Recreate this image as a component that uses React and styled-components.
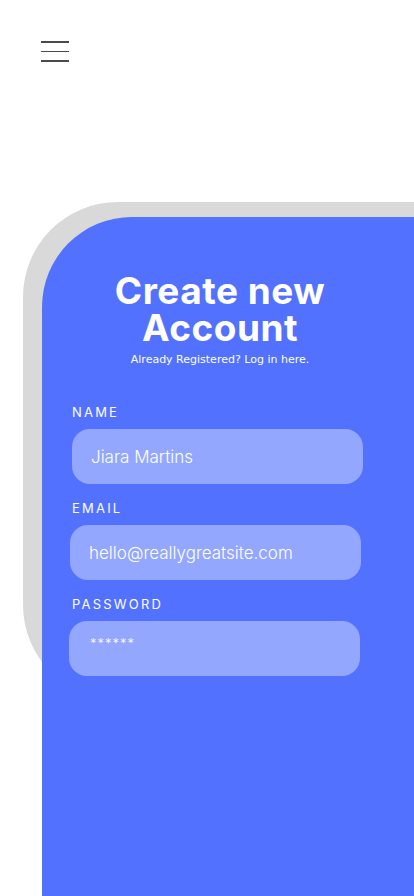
import React from "react";
import styled, { createGlobalStyle } from "styled-components";

const GlobalStyle = createGlobalStyle`
    html, body {
        margin: 0;
        padding: 0;
        background: #ffffff;
        overflow: hidden;
    }
    body {
        font-family: Inter, "Noto Sans", sans-serif;
    }
`;

const fields = [
    { label: "NAME", value: "Jiara Martins", shift: 0 },
    { label: "EMAIL", value: "hello@reallygreatsite.com", shift: -2 },
    { label: "PASSWORD", value: "******", shift: -3, secret: true },
];

const App = () => {
    return (
        <>
            <GlobalStyle />
            <Page>
                <TopBar>
                    <MenuButton aria-label="Menu">
                        <Bar />
                        <Bar />
                        <Bar />
                    </MenuButton>
                </TopBar>
                <Backdrop>
                    <Card>
                        <Content>
                            <Title>
                                Create new
                                <br />
                                Account
                            </Title>
                            <Subtitle>Already Registered? Log in here.</Subtitle>
                            <Form>
                                {fields.map((field) => (
                                    <Field key={field.label}>
                                        <Label>{field.label}</Label>
                                        <InputBox $shift={field.shift} $secret={field.secret}>
                                            {field.value}
                                        </InputBox>
                                    </Field>
                                ))}
                            </Form>
                        </Content>
                    </Card>
                </Backdrop>
            </Page>
        </>
    );
};

export default App;

const Page = styled.div`
    width: 414px;
    height: 896px;
    overflow: hidden;
    position: relative;
`;

const TopBar = styled.header`
    box-sizing: border-box;
    height: 202px;
    padding: 41px 0 0 41px;
`;

const MenuButton = styled.div`
    width: 28px;
    display: flex;
    flex-direction: column;
    gap: 8px;
`;

const Bar = styled.span`
    display: block;
    height: 1.5px;
    background: #4a4a4a;
`;

const Backdrop = styled.section`
    box-sizing: border-box;
    margin-left: 23px;
    width: 480px;
    height: 498px;
    padding: 15px 0 0 19px;
    background: #d9d9d9;
    border-radius: 95px 0 0 95px;
`;

const Card = styled.div`
    box-sizing: border-box;
    width: 460px;
    height: 700px;
    background: #5271ff;
    border-radius: 90px 0 0 0;
    padding: 55px 0 0 30px;
`;

const Content = styled.div`
    width: 291px;
    display: flex;
    flex-direction: column;
`;

const Title = styled.h1`
    margin: 0;
    padding-left: 5px;
    text-align: center;
    color: #ffffff;
    font-family: Inter, "Noto Sans", sans-serif;
    font-weight: 700;
    font-size: 37px;
    line-height: 37px;
    letter-spacing: 0.5px;
`;

const Subtitle = styled.p`
    margin: 7px 0 0;
    padding-left: 5px;
    text-align: center;
    color: #ffffff;
    font-family: "DejaVu Sans", sans-serif;
    font-size: 11px;
    line-height: 14px;
`;

const Form = styled.div`
    margin-top: 37px;
    display: flex;
    flex-direction: column;
    gap: 16px;
`;

const Field = styled.div`
    display: flex;
    flex-direction: column;
`;

const Label = styled.span`
    color: #ffffff;
    font-family: Inter, sans-serif;
    font-size: 13px;
    line-height: 16px;
    letter-spacing: 2.2px;
    margin-bottom: 9px;
`;

const InputBox = styled.div`
    box-sizing: border-box;
    margin-left: ${(p) => p.$shift}px;
    width: 291px;
    height: 55px;
    border-radius: 18px;
    background: #93a7ff;
    color: #ffffff;
    display: flex;
    align-items: ${(p) => (p.$secret ? "flex-start" : "center")};
    padding: ${(p) => (p.$secret ? "14px 0 0 21px" : "0 0 0 19px")};
    font-family: Inter, sans-serif;
    font-weight: 300;
    font-size: ${(p) => (p.$secret ? "13px" : "17px")};
    letter-spacing: ${(p) => (p.$secret ? "1px" : "0")};
`;
